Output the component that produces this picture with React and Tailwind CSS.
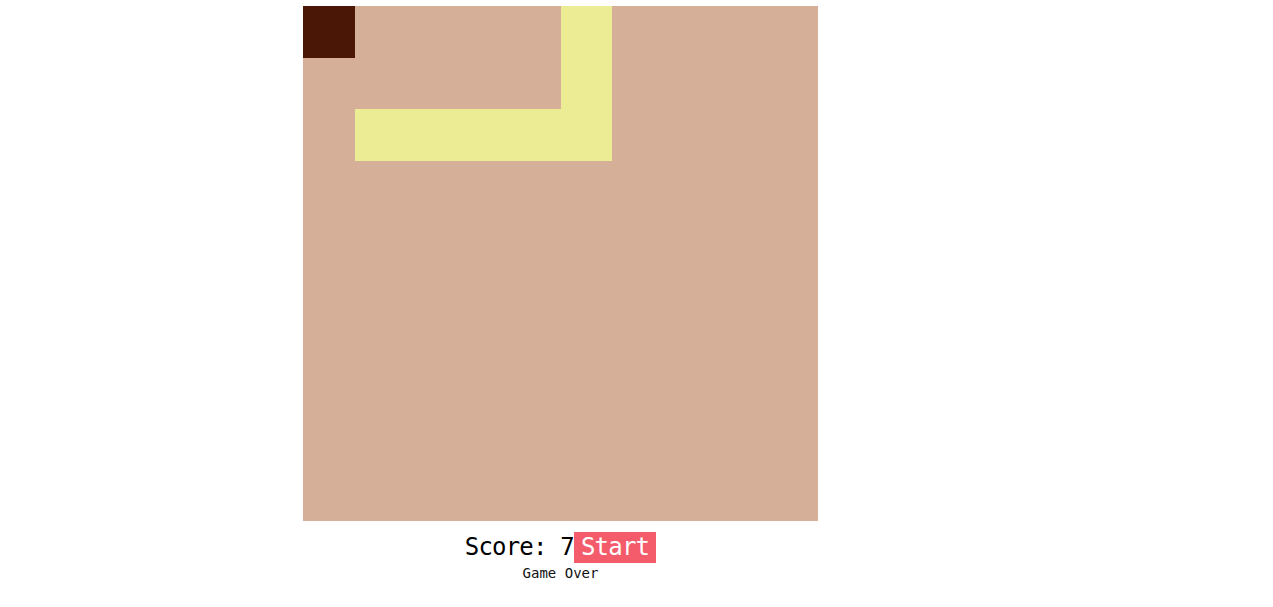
import React from "react";

const SIZE = 10;
const food = [0, 0];
const snake = [
  [5, 0],
  [5, 1],
  [5, 2],
  [4, 2],
  [3, 2],
  [2, 2],
  [1, 2],
];

const cellColor = (x, y) => {
  if (food[0] === x && food[1] === y) return "bg-[#4a1606]";
  if (snake.some(([sx, sy]) => sx === x && sy === y)) return "bg-[#ecec94]";
  return "bg-[#d6af98]";
};

export default function App() {
  const cells = [];
  for (let y = 0; y < SIZE; y++) {
    for (let x = 0; x < SIZE; x++) {
      cells.push(<div key={`${x}-${y}`} className={cellColor(x, y)} />);
    }
  }

  return (
    <div className="min-h-screen bg-white pt-[6px] pl-[303px] font-['DejaVu_Sans_Mono',monospace]">
      <div className="w-[515px]">
        {/* Board */}
        <div className="grid grid-cols-10 grid-rows-10 w-[515px] h-[515px]">
          {cells}
        </div>

        {/* Score + start */}
        <div className="mt-[11px] flex items-center justify-center">
          <span className="text-[24px] leading-[31px] tracking-[-0.8px] text-black">
            Score: 7
          </span>
          <button className="h-[31px] px-[7px] bg-[#f45b6b] text-white text-[24px] leading-[31px] tracking-[-0.8px]">
            Start
          </button>
        </div>
        <p className="mt-[1px] text-center text-[14px] leading-[18px] text-[#111]">
          Game Over
        </p>
      </div>
    </div>
  );
}
